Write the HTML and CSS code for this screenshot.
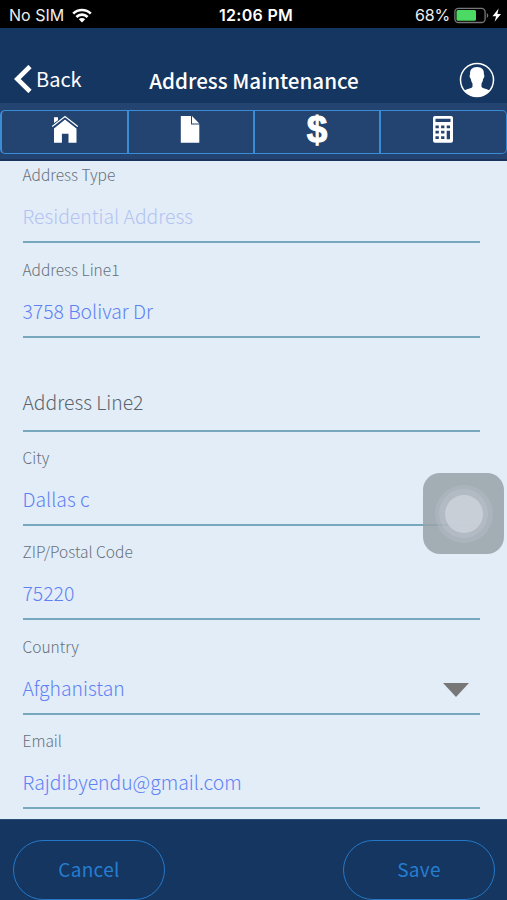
FILE: index.html
```html
<!DOCTYPE html>
<html lang="en">
<head>
<meta charset="utf-8">
<title>Address Maintenance</title>
<link rel="stylesheet" href="styles.css">
</head>
<body>
<div class="screen">
  <div class="status">
    <div class="status-left"><span class="carrier">No SIM</span>
      <svg class="wifi" width="20" height="15" viewBox="0 0 20 15"><g fill="none" stroke="#fff" stroke-width="2.6"><path d="M1.200 5.600a12.400 12.400 0 0 1 17.600 0"/><path d="M4.400 9a7.900 7.900 0 0 1 11.200 0"/></g><path d="M10 14.600 6.800 11.300a4.600 4.600 0 0 1 6.400 0z" fill="#fff"/></svg>
    </div>
    <span class="clock">12:06 PM</span>
    <div class="status-right"><span class="percent">68%</span>
      <svg class="battery" width="49" height="17" viewBox="0 0 49 17"><rect x=".9" y="1.300" width="30.200" height="14.200" rx="3.600" fill="none" stroke="#777" stroke-width="1.300"/><rect x="2.500" y="3" width="19.500" height="10.800" rx="1.500" fill="#4cd964"/><path d="M32.800 6v5a2.900 2.900 0 0 0 0-5z" fill="#777"/><path d="M44.600 1.500 38.500 9.200h3.600l-1.500 5.600 6.400-7.800h-3.600z" fill="#fff"/></svg>
    </div>
  </div>
  <header class="header">
    <a class="back"><svg width="18" height="28" viewBox="0 0 18 28"><path d="M16 1.500 3.300 14 16 26.500" fill="none" stroke="#fff" stroke-width="4.600"/></svg><span>Back</span></a>
    <h1 class="title">Address Maintenance</h1>
    <svg class="avatar" width="36" height="36" viewBox="0 0 36 36"><circle cx="18" cy="18" r="16.500" fill="none" stroke="#fff" stroke-width="1.500"/><path d="M18 5c5 0 7.300 2.800 6.900 7.500.8.300.5 3.500-.7 4.200-.3 2-.9 3.500-1.700 4.700v3.300c1.200 2 5.500 2 8.200 3.700C27.700 32.200 23.200 34.500 18 34.500S8.300 32.200 5.300 28.400c2.700-1.700 7-1.700 8.200-3.700v-3.300c-.8-1.200-1.400-2.700-1.700-4.700-1.200-.7-1.500-3.900-.7-4.200C10.700 7.800 13 5 18 5z" fill="#fff"/></svg>
  </header>
  <nav class="tabs">
    <div class="tab-group">
      <div class="tab"><svg width="28" height="28" viewBox="0 0 28 28" fill="#fff"><path d="M3 8V2.300h4v3zM14 4.500l11.500 9v14.200h-8V18.700h-6.600v9H3V13.500z"/><path d="M1 12.500 14 2.500 27 12.500" fill="none" stroke="#234370" stroke-width="2.600"/><path d="M1.200 11.500 14 1.500 26.800 11.500" fill="none" stroke="#fff" stroke-width="1.200"/></svg></div>
      <div class="tab doc"><svg width="20" height="28" viewBox="0 0 20 28"><path d="M.8 1H11v8.500h8.300v18.200H.8zM12 1l7.300 7.500H12z" fill="#fff"/></svg></div>
      <div class="tab"><span class="dollar">$</span></div>
      <div class="tab calc"><svg width="22" height="28" viewBox="0 0 22 28"><rect x="1" y="1" width="20" height="26.700" rx="2" fill="#fff"/><g fill="#234370"><path d="M3.500 3.700h15v3.300h-15zM3.500 10.500h3.300v2.700H3.500zM9.100 10.500h3.300v2.700H9.100zM14.700 10.500H18v2.700h-3.300zM3.500 15.800h3.300v2.700H3.500zM9.100 15.800h3.300v2.700H9.100zM14.700 15.800H18v8.500h-3.300zM3.500 21.300h3.300V24H3.500zM9.100 21.300h3.300V24H9.100z"/></g></svg></div>
    </div>
  </nav>
  <main class="form">
    <div class="field first"><span class="label">Address Type</span><span class="value disabled">Residential Address</span></div>
    <div class="field"><span class="label">Address Line1</span><span class="value">3758 Bolivar Dr</span></div>
    <div class="field"><span class="value empty">Address Line2</span></div>
    <div class="field"><span class="label">City</span><span class="value">Dallas c</span></div>
    <div class="field"><span class="label">ZIP/Postal Code</span><span class="value">75220</span></div>
    <div class="field"><span class="label">Country</span><span class="value select">Afghanistan<svg width="26" height="14" viewBox="0 0 26 14"><path d="M0 0h26L13 14z" fill="#777"/></svg></span></div>
    <div class="field"><span class="label">Email</span><span class="value">Rajdibyendu@gmail.com</span></div>
  </main>
  <footer class="footer"><span class="btn">Cancel</span><span class="btn">Save</span></footer>
  <div class="touch"><div class="ring"><div class="ring inner"><div class="dot"></div></div></div></div>
</div>
</body>
</html>
```
FILE: styles.css
```css
* { box-sizing: border-box; }
body { margin: 0; }
.screen { position: relative; width: 507px; height: 900px; overflow: hidden; display: flex; flex-direction: column; background: #e3edf8; font-family: "Noto Sans CJK SC", sans-serif; color: #fff; }
.status { height: 28px; flex: none; background: #000; display: grid; grid-template-columns: 1fr auto 1fr; align-items: center; padding: 2px 4px 0 9px; font: 16px/26px Inter, sans-serif; }
.status-left, .status-right { display: flex; align-items: center; gap: 8px; }
.status-right { justify-content: flex-end; gap: 4px; }
.carrier, .percent { color: #eee; }
.percent { letter-spacing: -.2px; }
.clock { font-weight: 600; letter-spacing: .3px; }
.header { height: 75px; flex: none; background: #143660; display: grid; grid-template-columns: 135px 1fr 135px; align-items: center; padding: 29px 12px 0 14px; }
.back { display: flex; align-items: center; gap: 4px; font-size: 20px; line-height: 28px; height: 34px; position: relative; top: -1px; }
.title { margin: 0; font-size: 20.600px; line-height: 30px; font-weight: 500; text-align: center; white-space: nowrap; margin-left: -1px; }
.avatar { justify-self: end; }
.tabs { height: 58px; flex: none; background: #234370; border-bottom: 2px solid #1c345d; padding: 7px 0 0; }
.tab-group { display: grid; grid-template-columns: 125px 126px 126px 1fr; height: 44px; border: 1.500px solid #3b8cd6; border-left-width: 2px; border-radius: 5px; }
.tab { display: flex; align-items: flex-start; justify-content: center; padding-top: 4px; }
.tab + .tab { border-left: 2px solid #3b8cd6; }
.doc, .calc { padding-right: 2px; }
.dollar { font: bold 37px/30px "Liberation Sans", sans-serif; -webkit-text-stroke: 1px #fff; }
.form { height: 658px; flex: none; padding: 0 27px 0 22.500px; }
.field { height: 94.250px; border-bottom: 2px solid #78a8bd; display: flex; flex-direction: column; justify-content: flex-end; padding-bottom: 10px; }
.field.first { height: 82.400px; }
.label { font-size: 15.500px; line-height: 22px; font-weight: 300; color: #65707a; margin-bottom: 16px; }
.value { font-size: 19.350px; line-height: 30px; font-weight: 300; color: #5f82f3; }
.disabled { color: #b3c3f2; }
.empty { color: #5c656e; margin-bottom: 3px; }
.select { display: flex; justify-content: space-between; align-items: center; padding-right: 11px; }
.select svg { position: relative; top: 2px; }
.footer { height: 81px; flex: none; background: #143660; border-top: 1px solid #2a4c75; display: flex; justify-content: space-between; padding: 20px 12px 0 13px; }
.btn { width: 152px; height: 60px; border: 1px solid #2578c8; border-radius: 30px; display: flex; align-items: center; justify-content: center; font-size: 19px; letter-spacing: .3px; padding-bottom: 3px; color: #277dd0; }
.touch { position: absolute; left: 423px; top: 473px; width: 81px; height: 81px; border-radius: 17px; background: rgba(152,163,170,.87); display: flex; align-items: center; justify-content: center; }
.ring { width: 58px; height: 58px; border-radius: 50%; background: rgba(190,196,205,.35); display: flex; align-items: center; justify-content: center; }
.inner { width: 49px; height: 49px; background: rgba(190,196,205,.4); }
.dot { width: 38px; height: 38px; border-radius: 50%; background: rgba(205,210,218,.85); }
```
